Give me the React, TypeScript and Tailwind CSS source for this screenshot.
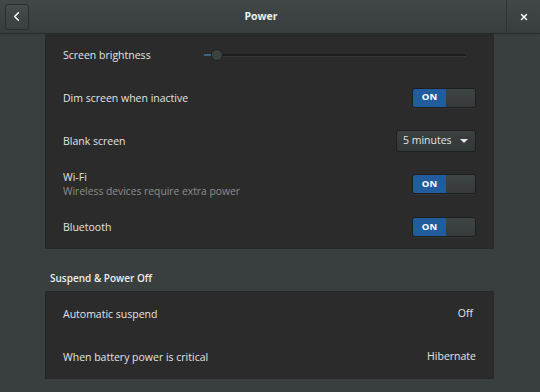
import { ChevronLeft, X } from 'lucide-react';

function Toggle() {
  return (
    <div className="flex h-[20px] w-[64px] shrink-0 overflow-hidden rounded-[3px] border border-[#1c1f1f] shadow-[0_1px_0_rgba(255,255,255,0.04)]">
      <div className="flex w-[33px] items-center justify-center bg-[#215d9c] text-[9.5px] font-bold text-white">ON</div>
      <div className="flex-1 bg-gradient-to-b from-[#3f4444] to-[#363a3a]" />
    </div>
  );
}

function Row({ label, sub, children, h = 'h-[43px]' }: { label: string; sub?: string; children?: React.ReactNode; h?: string }) {
  return (
    <div className={`flex items-center justify-between pl-[17px] pr-[17px] ${h}`}>
      <div className="flex flex-col leading-[14px]">
        <span className="text-[10.5px] text-[#e2e4e4]">{label}</span>
        {sub && <span className="text-[10.3px] text-[#8b8e8e]">{sub}</span>}
      </div>
      {children}
    </div>
  );
}

export default function App() {
  return (
    <div className="flex h-[392px] w-[540px] flex-col overflow-hidden bg-[#393f3f]" style={{ fontFamily: '"Open Sans", "Noto Sans", sans-serif' }}>
      {/* Header bar */}
      <div className="flex h-[34px] items-stretch border-b border-[#262a2a] bg-gradient-to-b from-[#424848] to-[#383e3e]">
        <div className="flex w-[33px] items-center justify-center">
          <div className="flex h-[26px] w-[24px] items-center justify-center rounded-[3px] border border-[#2a2e2e] bg-gradient-to-b from-[#454b4b] to-[#3a3f3f]">
            <ChevronLeft size={15} strokeWidth={2.5} className="text-white" />
          </div>
        </div>
        <div className="flex flex-1 items-center justify-center pr-[17px] text-[10.5px] font-bold text-[#eeeeec]">Power</div>
        <div className="flex w-[34px] items-center justify-center border-l border-[#2e3333]">
          <X size={10} strokeWidth={3.5} className="text-white" />
        </div>
      </div>

      {/* Content */}
      <div className="flex flex-col pl-[45px] pr-[46px]">
        <div className="flex flex-col border border-t-0 border-[#262929] bg-[#2b2b2b]">
          <Row label="Screen brightness" h="h-[42px]">
            <div className="relative mr-[10px] flex h-[14px] w-[262px] items-center">
              <div className="h-[2px] w-[10px] bg-[#3f5f86]" />
              <div className="h-[2px] flex-1 bg-[#1c1e1e] shadow-[0_1px_0_rgba(255,255,255,0.06)]" />
              <div className="absolute left-[7px] top-[1px] h-[12px] w-[12px] rounded-full border border-[#1f2222] bg-[#3d4242]" />
            </div>
          </Row>
          <Row label="Dim screen when inactive"><Toggle /></Row>
          <Row label="Blank screen">
            <div className="flex h-[22px] w-[80px] shrink-0 items-center justify-between rounded-[3px] border border-[#1e2121] bg-gradient-to-b from-[#3b4040] to-[#333737] pl-[6px] pr-[7px] text-[10.5px] text-[#e2e4e4]">
              <span>5 minutes</span>
              <span className="h-0 w-0 border-l-[4px] border-r-[4px] border-t-[4px] border-l-transparent border-r-transparent border-t-[#e6e6e6]" />
            </div>
          </Row>
          <Row label="Wi-Fi" sub="Wireless devices require extra power" h="h-[44px]"><Toggle /></Row>
          <Row label="Bluetooth" h="h-[42px]"><Toggle /></Row>
        </div>

        <div className="flex h-[42px] items-start pl-[5px] pt-[22px] text-[10px] font-semibold leading-[14px] text-[#eeeeec]">Suspend &amp; Power Off</div>

        <div className="flex flex-col border border-[#262929] bg-[#2b2b2b]">
          <Row label="Automatic suspend">
            <span className="pr-[3px] text-[10.5px] text-[#e2e4e4]">Off</span>
          </Row>
          <Row label="When battery power is critical">
            <span className="text-[10.5px] text-[#e2e4e4]">Hibernate</span>
          </Row>
        </div>
      </div>
    </div>
  );
}
